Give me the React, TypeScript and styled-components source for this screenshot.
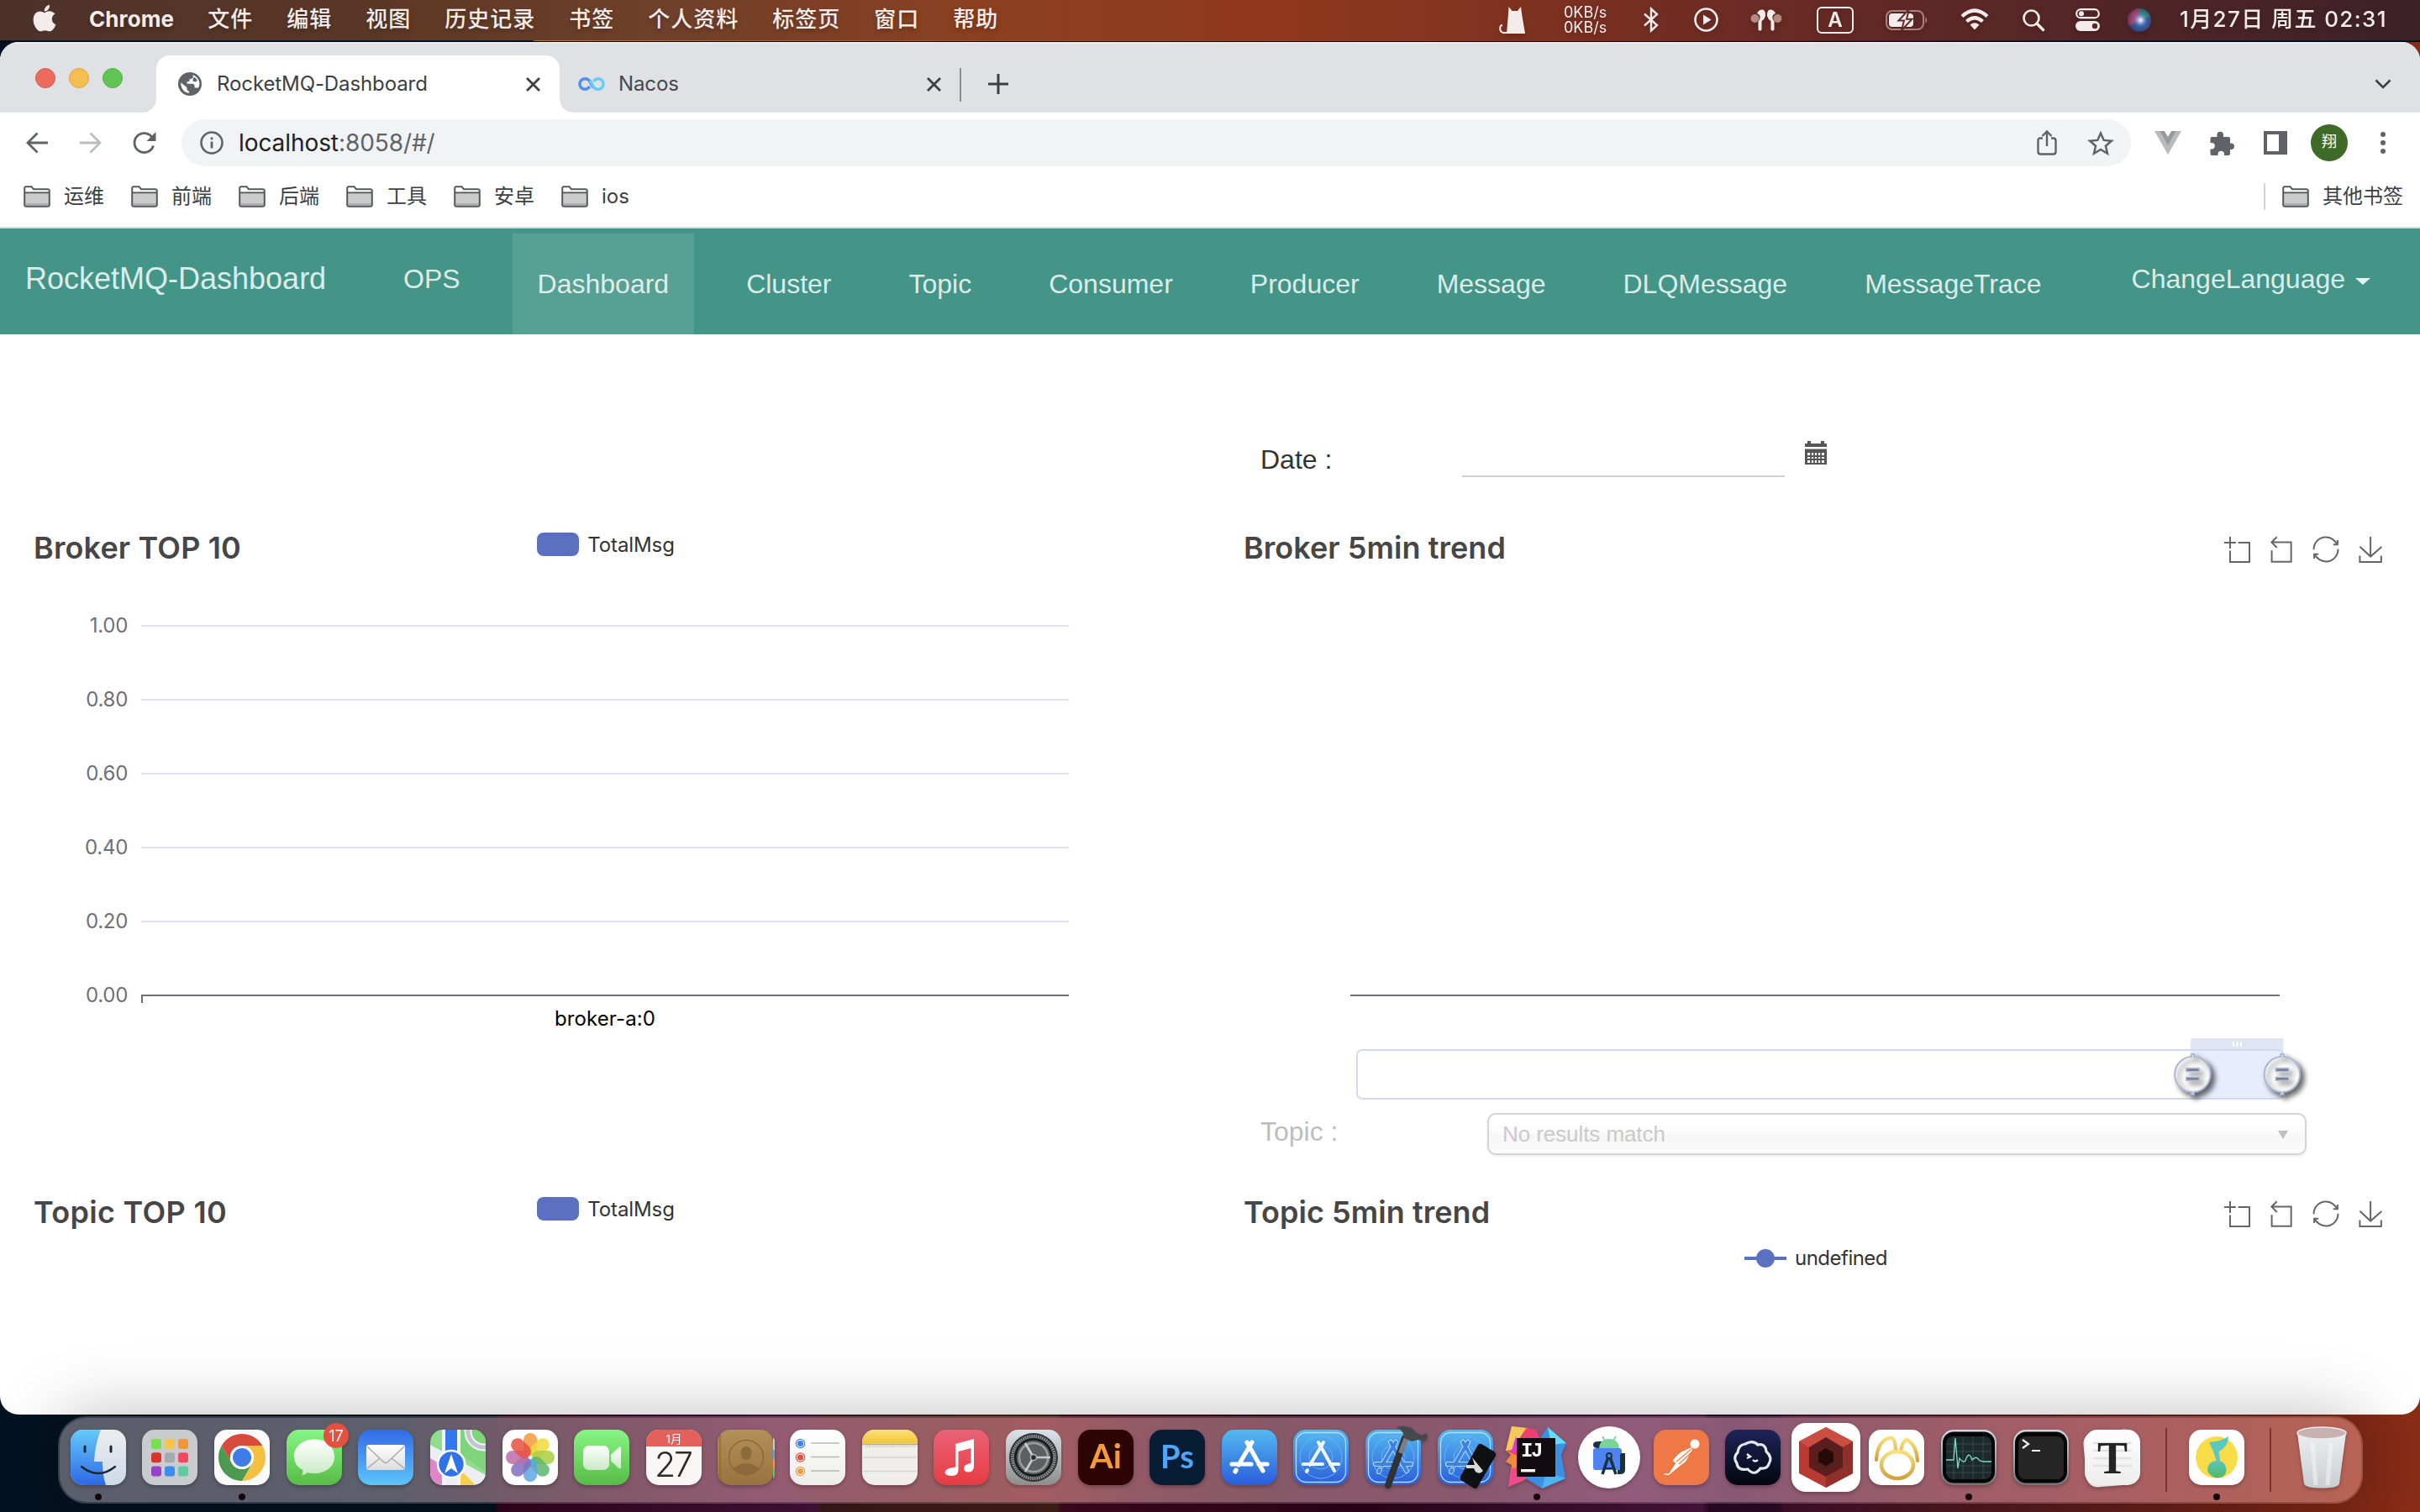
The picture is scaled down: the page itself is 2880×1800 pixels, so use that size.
import React from "react";
import styled, { createGlobalStyle } from "styled-components";

const UI = `Inter, "Noto Sans CJK SC", sans-serif`;
const HELV = `"Liberation Sans", "Noto Sans CJK SC", sans-serif`;

const GlobalStyle = createGlobalStyle`
  * { box-sizing: border-box; }
  body { margin: 0; width: 2880px; height: 1800px; overflow: hidden; font-family: ${UI}; }
  svg { display: block; flex: none; overflow: visible; }
`;

/* ---------- desktop ---------- */

const Desktop = styled.div`
  width: 2880px;
  height: 1800px;
  display: flex;
  flex-direction: column;
  overflow: hidden;
  background:
    linear-gradient(90deg, #031222 0, #03101c 588px, #33051c 594px, #45133c 970px, #3d1a1c 978px, #43201a 1258px,
      #42081f 1264px, #2c0519 1620px, #4a1640 2026px, #2a0a25 2034px, #2c0a24 2116px, #43102c 2124px, #5b1c1c 2440px,
      #7f2715 2780px, #8a2d16 2880px);
`;

const MenuBar = styled.header`
  flex: none;
  height: 48px;
  padding: 0 36px 3px 39px;
  display: flex;
  align-items: center;
  color: #f3ecea;
  font: 500 26px/45px ${UI};
  background: linear-gradient(90deg, #4d3129 0, #5b3826 450px, #70402a 800px, #8c3f1f 1180px, #90381c 1500px,
    #85341e 1720px, #6b2b24 2080px, #552626 2440px, #3c2129 2880px);
`;

const MenuTitles = styled.nav`
  display: flex;
  flex: 1;
  gap: 40px;
  letter-spacing: 1px;
  text-shadow: 0 3px 5px rgba(0, 0, 0, 0.25);
`;

const AppleMark = styled.span`
  width: 27px;
  padding-top: 5px;
`;

const AppName = styled.b`
  letter-spacing: 0.1px;
  font-weight: 700;
`;

const StatusItem = styled.span<{ $gap: number; $w?: number }>`
  flex: none;
  margin-left: ${(p) => p.$gap}px;
  width: ${(p) => (p.$w ? `${p.$w}px` : "auto")};
  white-space: nowrap;
  filter: drop-shadow(0 3px 3px rgba(0, 0, 0, 0.2));
`;

const NetSpeed = styled.span`
  display: block;
  padding-top: 3px;
  font: 400 18px/18px ${UI};
`;

const KeyBox = styled.span`
  display: flex;
  align-items: center;
  justify-content: center;
  width: 44px;
  height: 32px;
  margin-top: 3px;
  border: 2px solid #f3ecea;
  border-radius: 6px;
  font: 600 24px/28px ${UI};
`;

const Clock = styled.time`
  letter-spacing: 1.4px;
`;

const Seam = styled.div`
  flex: none;
  height: 2px;
  border-bottom: 1px solid #050505;
  background: linear-gradient(90deg, #03182c 0, #03182c 634px, #b5752c 636px, #a04a1e 1200px, #8a2c16 1900px, #501027 2250px,
    #0b1430 2500px, #04182c 2880px);
`;

/* ---------- browser window ---------- */

const Window = styled.main`
  flex: none;
  height: 1634px;
  display: flex;
  flex-direction: column;
  border-radius: 22px;
  overflow: hidden;
  background: #fff;
`;

const TabStrip = styled.div`
  flex: none;
  height: 84px;
  display: flex;
  align-items: flex-end;
  background: #dfe1e5;
  border-top: 2px solid #ebecef;
`;

const Lights = styled.div`
  width: 186px;
  height: 82px;
  padding: 0 0 0 42px;
  display: flex;
  align-items: center;
  gap: 16px;
`;

const Light = styled.i<{ $c: string; $b: string }>`
  width: 24px;
  height: 24px;
  border-radius: 50%;
  background: ${(p) => p.$c};
  border: 1px solid ${(p) => p.$b};
`;

const Tab = styled.div<{ $active?: boolean; $w: number; $gap: number }>`
  position: relative;
  width: ${(p) => p.$w}px;
  height: 68px;
  padding: 0 ${(p) => (p.$active ? 23 : 22)}px 0 ${(p) => (p.$active ? 26 : 22)}px;
  display: flex;
  align-items: center;
  gap: ${(p) => p.$gap}px;
  border-radius: 16px 16px 0 0;
  background: ${(p) => (p.$active ? "#fff" : "transparent")};
  color: ${(p) => (p.$active ? "#3c4043" : "#45494d")};
  font-size: 24px;
  letter-spacing: -0.1px;

  &::before,
  &::after {
    content: "";
    display: ${(p) => (p.$active ? "block" : "none")};
    position: absolute;
    bottom: 0;
    width: 16px;
    height: 16px;
  }
  &::before {
    left: -16px;
    background: radial-gradient(circle at 0 0, transparent 15.5px, #fff 16px);
  }
  &::after {
    right: -16px;
    background: radial-gradient(circle at 100% 0, transparent 15.5px, #fff 16px);
  }
`;

const TabLabel = styled.span`
  flex: 1;
  line-height: 66px;
`;

const TabDivider = styled.i`
  width: 2px;
  height: 40px;
  margin-bottom: 13px;
  background: #8a8d91;
`;

const NewTab = styled.div`
  flex: 1;
  height: 68px;
  padding: 0 34px 0 32px;
  display: flex;
  align-items: center;
  justify-content: space-between;
`;

const Toolbar = styled.div`
  flex: none;
  height: 72px;
  padding: 0 12px;
  display: flex;
  align-items: center;
`;

const IconSlot = styled.div`
  width: 64px;
  height: 56px;
  display: flex;
  align-items: center;
  justify-content: center;
`;

const Omnibox = styled.div`
  flex: 1;
  height: 56px;
  margin: 0 12px;
  padding: 0 4px 0 22px;
  display: flex;
  align-items: center;
  border-radius: 28px;
  background: #f1f3f4;
`;

const Url = styled.div`
  flex: 1;
  padding-left: 18px;
  font-size: 28px;
  line-height: 54px;
  letter-spacing: -0.08px;
  color: #5f6368;
`;

const UrlHost = styled.span`
  color: #202124;
`;

const Avatar = styled.div`
  width: 44px;
  height: 44px;
  border-radius: 50%;
  background: #3f6a28;
  color: #fff;
  text-align: center;
  font: 400 18px/42px ${UI};
`;

const Bookmarks = styled.div`
  flex: none;
  height: 66px;
  padding: 0 20px 8px 28px;
  display: flex;
  align-items: center;
  border-bottom: 2px solid #d9dbdd;
  color: #3c4043;
  font: 400 24px/52px ${UI};
`;

const Bookmark = styled.div<{ $w?: number }>`
  width: ${(p) => (p.$w ? `${p.$w}px` : "auto")};
  display: flex;
  align-items: center;
  gap: 16px;
`;

const BookmarkDivider = styled.i`
  width: 2px;
  height: 32px;
  margin: 0 20px 0 auto;
  background: #cfd1d4;
`;

/* ---------- dashboard page ---------- */

const Nav = styled.nav`
  flex: none;
  height: 126px;
  padding-left: 30px;
  display: flex;
  background: #439588;
  color: rgba(255, 255, 255, 0.84);
  font: 400 32px/120px ${HELV};
`;

const Brand = styled.a`
  width: 420px;
  font-size: 36px;
  line-height: 119px;
`;

const NavItem = styled.a<{ $active?: boolean; $raised?: boolean }>`
  height: 120px;
  margin: ${(p) => (p.$raised ? 0 : 6)}px 32px 0 0;
  padding: 0 30px;
  background: ${(p) => (p.$active ? "#57a094" : "transparent")};
`;

const Language = styled.a`
  margin-left: 15px;
  padding-left: 30px;
  display: flex;
  align-items: center;
  gap: 12px;
  height: 120px;
`;

const Caret = styled.i`
  border: 9px solid transparent;
  border-top: 8px solid rgba(255, 255, 255, 0.88);
  border-bottom: 0;
  margin-top: 5px;
`;

const Page = styled.section`
  flex: 1;
  display: grid;
  grid-template-columns: 1fr 1fr;
`;

const LeftColumn = styled.div`
  padding-top: 230px;
`;

const RightColumn = styled.div`
  padding-top: 128px;
`;

const FormRow = styled.label<{ $muted?: boolean }>`
  display: flex;
  padding-left: 60px;
  height: ${(p) => (p.$muted ? 50 : 42)}px;
  font: 400 32px/${(p) => (p.$muted ? 44 : 42)}px ${HELV};
  color: ${(p) => (p.$muted ? "#bdbdbd" : "#333")};
`;

const FieldName = styled.span<{ $w: number }>`
  width: ${(p) => p.$w}px;
`;

const DateInput = styled.div`
  width: 384px;
  border-bottom: 2px solid #cfcfcf;
  margin-right: 24px;
`;

const Select = styled.div`
  width: 975px;
  height: 50px;
  padding: 0 20px 0 16px;
  display: flex;
  align-items: center;
  justify-content: space-between;
  border: 2px solid #d4d4d4;
  border-radius: 10px;
  background: linear-gradient(#fff 20%, #fafafa 50%, #f6f6f6 52%, #fbfbfb 100%);
  box-shadow: 0 2px 3px rgba(0, 0, 0, 0.07);
  font: 400 26px/48px ${HELV};
  letter-spacing: -0.08px;
  color: #cacaca;
`;

const SelectArrow = styled.i`
  border: 6px solid transparent;
  border-top: 10px solid #bfbfbf;
  border-bottom: 0;
  margin-top: 2px;
`;

const ChartHeader = styled.div<{ $top?: number }>`
  height: 40px;
  margin-top: ${(p) => p.$top || 0}px;
  padding: 0 44px 0 40px;
  display: grid;
  grid-template-columns: 1fr auto 1fr;
`;

const ChartTitle = styled.h2<{ $track?: number }>`
  margin: 0;
  font: 560 36px/48px ${UI};
  letter-spacing: ${(p) => p.$track || 0}px;
  color: #464646;
`;

const Legend = styled.div<{ $centered?: boolean }>`
  height: 40px;
  margin-top: ${(p) => (p.$centered ? 19 : 0)}px;
  padding-left: ${(p) => (p.$centered ? 2 : 6)}px;
  display: flex;
  align-items: center;
  justify-content: center;
  gap: 10px;
  font: 400 24px/42px ${UI};
  letter-spacing: ${(p) => (p.$centered ? -0.5 : -0.1)}px;
  color: #333;
`;

const LegendLabel = styled.span`
  padding-top: 2px;
`;

const Swatch = styled.i`
  width: 50px;
  height: 28px;
  border-radius: 8px;
  background: #5b70c0;
`;

const Toolbox = styled.div`
  display: flex;
  justify-content: flex-end;
  align-items: flex-start;
  gap: 23px;
  padding-top: 11px;
`;

/* ---------- dock ---------- */

const Dock = styled.footer`
  position: relative;
  flex: none;
  width: 2743px;
  height: 104px;
  margin: 2px 0 0 69px;
  padding-left: 3px;
  display: flex;
  border: 2px solid rgba(255, 255, 255, 0.2);
  border-radius: 34px;
  background: linear-gradient(90deg, #5b5f6b 0, #5d5f6b 400px, #755a68 540px, #85596a 700px, #935b72 840px, #9b5d60 1090px,
    #a35d62 1160px, #915a66 1290px, #865968 1440px, #8a5970 1700px, #935b7b 1870px, #885974 1990px, #9a5c6a 2200px,
    #a85f62 2450px, #b86355 2743px) padding-box;
  box-shadow: 0 0 84px rgba(0, 0, 0, 0.27);
`;

const DockSlot = styled.div<{ $gap?: number }>`
  flex: none;
  width: 85.64px;
  margin-left: ${(p) => p.$gap || 0}px;
  padding-top: 14px;
  display: flex;
  flex-direction: column;
  align-items: center;
  gap: 10px;
`;

const DockIcon = styled.div`
  height: 66px;
  filter: drop-shadow(0 2px 2px rgba(0, 0, 0, 0.28));
`;

const RunningDot = styled.i`
  width: 8px;
  height: 8px;
  border-radius: 50%;
  background: #150508;
`;

const DockDivider = styled.i<{ $gap: number }>`
  flex: none;
  width: 2px;
  height: 76px;
  margin: 12px 0 0 ${(p) => p.$gap}px;
  background: #7b332c;
`;

/* ---------- small icons ---------- */

const Folder = () => (
  <svg width="32" height="26" viewBox="0 0 32 26">
    <path d="M1.2 22.5V3Q1.2 1.2 3 1.2H9.5L12 4.2H28.6Q30.8 4.2 30.8 6.4V22.5Q30.8 24.8 28.6 24.8H3.4Q1.2 24.8 1.2 22.5Z" fill="#cbcbcb" stroke="#55585b" strokeWidth="2" />
    <path d="M2.4 2.4H9L11.3 5.4H29.6V7.6H2.4Z" fill="#fff" />
    <path d="M1.5 8.4H30.5" stroke="#55585b" strokeWidth="1.6" />
    <path d="M2.4 22.4H29.6" stroke="#a9a9a9" strokeWidth="2.4" />
  </svg>
);

const Close = () => (
  <svg width="17" height="17" viewBox="0 0 17 17">
    <path d="M1 1L16 16M16 1L1 16" stroke="#3c4043" strokeWidth="2.8" />
  </svg>
);

const Globe = () => (
  <svg width="28" height="28" viewBox="0 0 28 28">
    <circle cx="14" cy="14" r="14" fill="#5f6368" />
    <path d="M17.5 3.2L17.8 6.2Q16.5 8.3 13.5 8.4V11H10.5V13.8H17.5Q19.6 14 19.6 16.4V18.5H22.3Q24 18.7 24.3 18.2A11 11 0 0 0 17.5 3.2Z" fill="#fff" />
    <path d="M3.2 12.2Q3 20.5 9.5 24L12.8 25V22.2Q10.3 22 10.3 19.4V17.9Z" fill="#fff" />
    <path d="M17.6 10.8V7L20 6L22.8 9.5L21 11.6Z" fill="#5f6368" />
  </svg>
);

const NacosLogo = () => (
  <svg width="32" height="16" viewBox="0 0 32 16">
    <path d="M18.5 12.5Q15.500 9 14.500 6Q12.500 1.700 8.2 1.7A6.300 6.300 0 0 0 8.200 14.300Q11.500 14.300 13.600 11" fill="none" stroke="#4c8ff5" strokeWidth="3.4" />
    <path d="M14 3.800Q16.500 7 17.500 10Q19.500 14.300 23.800 14.300A6.300 6.300 0 0 0 23.800 1.700Q20.500 1.700 18.400 5" fill="none" stroke="#63cdf2" strokeWidth="3.4" />
  </svg>
);

const TOOL_PATHS = [
  { x: 0, y: 0, w: 58, h: 58, d: "M0,13.5h26.9 M13.5,26.9V0 M32.1,13.5H58V58H13.5 V32.1" },
  { x: 3.4, y: 1.4, w: 58, h: 56.7, d: "M22,1.4L9.9,13.5l12.3,12.3 M10.3,13.5H54.9v44.6 H10.3v-26" },
  { x: 1, y: 1, w: 58, h: 58, d: "M47,18.9h9.8V8.7 M56.3,20.1 C52.1,9,40.5,0.6,26.8,2.1C12.6,3.7,1.6,16.2,2.1,30.6 M13,41.1H3.1v10.2 M3.7,39.9c4.2,11.1,15.8,19.5,29.5,18 c14.2-1.6,25.2-14.1,24.7-28.5" },
  { x: 0, y: 0, w: 58, h: 58, d: "M4.7,22.9L29.3,45.5L54.7,23.4M4.6,43.6L4.6,58L53.8,58L53.8,43.6M29.2,45.1L29.2,0" },
];

const ChartTools = () => (
  <Toolbox>
    {TOOL_PATHS.map((t) => (
      <svg key={t.d} width="30" height="30" viewBox={`${t.x} ${t.y} ${t.w} ${t.h}`}>
        <path d={t.d} fill="none" stroke="#666" strokeWidth="3.9" />
      </svg>
    ))}
  </Toolbox>
);

const Calendar = () => (
  <svg width="26" height="28" viewBox="0 0 26 28" transform="translate(0 -1)">
    <path d="M0 3H3V0H7V3H19V0H23V3H26V7H0ZM0 9.4H26V28H0Z" fill="#555" />
    <path d="M3 14H23V26H3Z" fill="#fff" />
    <path d="M3 18H23M3 22H23M7 14V26M11 14V26M15 14V26M19 14V26" stroke="#555" strokeWidth="1.8" />
  </svg>
);

/* ---------- charts ---------- */

const TICKS = ["1.00", "0.80", "0.60", "0.40", "0.20", "0.00"];

const BarChart = () => (
  <svg width="1440" height="751" viewBox="0 668 1440 751" fontFamily={UI} fontSize="24">
    {TICKS.map((t, i) => (
      <g key={t}>
        {i < 5 && <rect x="168" y={744 + i * 88} width="1104" height="2" fill="#e0e4ef" />}
        <text x="152" y={753 + i * 88} textAnchor="end" fill="#6e7079" letterSpacing="-0.3">{t}</text>
      </g>
    ))}
    <path d="M168 1185H1272M169 1185V1194" stroke="#6e7079" strokeWidth="2" />
    <text x="720" y="1221" textAnchor="middle" fill="#000" letterSpacing="0.1">broker-a:0</text>
  </svg>
);

const HANDLE =
  "M10.7,11.9v-1.3H9.3v1.3c-4.9,0.3-8.8,4.4-8.8,9.4c0,5,3.9,9.1,8.8,9.4v1.3h1.3v-1.3c4.9-0.3,8.8-4.4,8.8-9.4C19.5,16.3,15.6,12.2,10.7,11.9z M13.3,24.4H6.7V23h6.6V24.4z M13.3,19.6H6.7v-1.4h6.6V19.6z";

const Handle = ({ x }: { x: number }) => (
  <g transform={`translate(${x} 1279) scale(2.24) translate(-10 -21.3)`}>
    <path d={HANDLE} fill="#fff" filter="url(#drop)" />
    <path d={HANDLE} fill="none" stroke="#acb8d1" strokeWidth="0.9" filter="url(#drop)" />
    <path d="M6.9 18.9H13.1M6.9 23.7H13.1" stroke="#6c7280" strokeWidth="0.7" />
  </g>
);

const TrendChart = () => (
  <svg width="1440" height="657" viewBox="1440 668 1440 657">
    <defs>
      <filter id="drop" x="-40%" y="-40%" width="200%" height="200%">
        <feDropShadow dx="1.9" dy="1.9" stdDeviation="1.4" floodColor="#000" floodOpacity="0.6" />
      </filter>
    </defs>
    <path d="M1607 1185H2713" stroke="#6e7079" strokeWidth="2" />
    <rect x="2607" y="1250" width="110" height="58" fill="#e8edfd" />
    <path d="M2607 1250V1239Q2607 1236 2610 1236H2714.500Q2717.500 1236 2717.500 1239V1250Z" fill="#dfe5f1" />
    <path d="M2658 1240V1246M2662.500 1240V1246M2667 1240V1246" stroke="#fff" strokeWidth="2" />
    <rect x="1615" y="1250" width="1102" height="58" rx="6" fill="none" stroke="#d2dbee" strokeWidth="2" />
    <Handle x={2609.5} />
    <Handle x={2716} />
  </svg>
);

/* ---------- status icons ---------- */

const W = "#f3ecea";

const Apple = () => (
  <svg width="28" height="33" viewBox="0 0 28 33">
    <path d="M20 0.500Q20.500 4.500 18.200 6.700Q16.200 8.700 13.800 8.400Q13.500 5.400 15.700 3Q17.500 1 20 0.500Z" fill={W} />
    <path d="M14 10.200Q16.800 8.300 19.800 8.300Q24 8.400 26.500 11.600Q22.700 14 22.800 18Q23 22.500 27.500 24.300Q26 28.500 23.200 31Q20.800 33 17.600 31.700Q14.600 30.600 11.600 31.700Q8.500 33 6 31Q0.500 25.500 0.600 17.700Q1.300 9.200 8.300 8.500Q11.200 8.500 14 10.200Z" fill={W} />
  </svg>
);

const StatusIcons = () => (
  <>
    <StatusItem $gap={0}>
      <svg width="31" height="32" viewBox="0 0 31 32" transform="translate(0 1)">
        <path d="M9 32L11 8L11.500 0L15.500 5H22L26 0L27 8L31 32Z" fill={W} />
        <path d="M11 31H5Q1 30 1.200 25Q1.500 22 4 22" fill="none" stroke={W} strokeWidth="2" />
      </svg>
    </StatusItem>
    <StatusItem $gap={46} $w={51}>
      <NetSpeed>0KB/s<br />0KB/s</NetSpeed>
    </StatusItem>
    <StatusItem $gap={43}>
      <svg width="20" height="29" viewBox="0 0 20 29" transform="translate(0 1)">
        <path d="M2 7.500L17 21L10 27.500V1.500L17 8L2 21.500" fill="none" stroke={W} strokeWidth="2.400" />
      </svg>
    </StatusItem>
    <StatusItem $gap={41}>
      <svg width="29" height="29" viewBox="0 0 29 29" transform="translate(0 1)">
        <circle cx="14.500" cy="14.500" r="13" fill="none" stroke={W} strokeWidth="2.600" />
        <path d="M11 8.500L20.500 14.500L11 20.500Z" fill={W} />
      </svg>
    </StatusItem>
    <StatusItem $gap={38}>
      <svg width="38" height="26" viewBox="0 0 38 26" transform="translate(0 1)">
        <circle cx="5.500" cy="11" r="5" fill="#b58a80" />
        <circle cx="32.500" cy="11" r="5" fill="#b58a80" />
        <path d="M8 5Q10 0 15 0.500Q18.500 2 18 8Q17 12 13.500 14V24Q13.500 25.500 11.500 25.500Q9.500 25.500 9.500 24V14.500Q12 12 11.500 8Q10.500 5.500 8 5Z" fill={W} />
        <path d="M30 5Q28 0 23 0.500Q19.500 2 20 8Q21 12 24.500 14V24Q24.500 25.500 26.500 25.500Q28.500 25.500 28.500 24V14.500Q26 12 26.500 8Q27.500 5.500 30 5Z" fill={W} />
      </svg>
    </StatusItem>
    <StatusItem $gap={41}><KeyBox>A</KeyBox></StatusItem>
    <StatusItem $gap={38}>
      <svg width="51" height="24" viewBox="0 0 51 24" transform="translate(0 1)">
        <rect x="1" y="1" width="44" height="22" rx="7" fill="none" stroke="#a98280" strokeWidth="2" />
        <path d="M47.500 8Q51 12 47.500 16Z" fill="#a98280" />
        <rect x="4" y="4" width="29" height="16" rx="4" fill={W} />
        <path d="M28 -1L15.500 12.500H22L19 24L31.500 10.800H25Z" fill={W} stroke="#65292a" strokeWidth="2" />
      </svg>
    </StatusItem>
    <StatusItem $gap={38}>
      <svg width="34" height="26" viewBox="0 0 34 26">
        <path d="M2 9.500Q17 -4.500 32 9.500" fill="none" stroke={W} strokeWidth="4.200" />
        <path d="M7.500 15.500Q17 7 26.500 15.500" fill="none" stroke={W} strokeWidth="4.200" />
        <path d="M11.500 19.500Q17 15 22.500 19.500L17 25.500Z" fill={W} />
      </svg>
    </StatusItem>
    <StatusItem $gap={40}>
      <svg width="26" height="26" viewBox="0 0 26 26" transform="translate(0 1)">
        <circle cx="10.500" cy="10.500" r="9" fill="none" stroke={W} strokeWidth="2.600" />
        <path d="M17 17L24.500 24.500" stroke={W} strokeWidth="3.400" strokeLinecap="round" />
      </svg>
    </StatusItem>
    <StatusItem $gap={37}>
      <svg width="29" height="27" viewBox="0 0 29 27" transform="translate(0 1)">
        <rect x="1.200" y="1.200" width="26.600" height="10" rx="5" fill="none" stroke={W} strokeWidth="2.200" />
        <circle cx="7" cy="6.200" r="3" fill={W} />
        <rect x="0" y="15" width="29" height="12" rx="6" fill={W} />
        <circle cx="23" cy="21" r="3.200" fill="#59282a" />
      </svg>
    </StatusItem>
    <StatusItem $gap={33}>
      <svg width="28" height="28" viewBox="0 0 28 28" transform="translate(0 1)">
        <defs>
          <radialGradient id="siri" cx="0.550" cy="0.500">
            <stop offset="0" stopColor="#fff" />
            <stop offset="0.250" stopColor="#a9b5e6" stopOpacity="0.850" />
            <stop offset="0.600" stopColor="#3b6fb5" stopOpacity="0.250" />
            <stop offset="1" stopColor="#2a2238" stopOpacity="0.450" />
          </radialGradient>
        </defs>
        <circle cx="14" cy="14" r="14" fill="#35539a" />
        <path d="M14 0A14 14 0 0 0 2 21L14 14Z" fill="#c4406e" />
        <path d="M14 0A14 14 0 0 1 27 10L14 14Z" fill="#2f8a72" />
        <circle cx="14" cy="14" r="14" fill="url(#siri)" />
      </svg>
    </StatusItem>
  </>
);

/* ---------- dock icons ---------- */

const grad = (id: string, a: string, b: string) => (
  <linearGradient id={id} x1="0" y1="0" x2="0" y2="1">
    <stop offset="0" stopColor={a} />
    <stop offset="1" stopColor={b} />
  </linearGradient>
);

const DockDefs = () => (
  <svg width="0" height="0">
    <defs>
      {grad("finderL", "#63cbf9", "#2f68e6")}
      {grad("finderR", "#ededf0", "#cedae9")}
      {grad("green", "#87f584", "#56bd45")}
      {grad("bubble", "#ffffff", "#c9e9c4")}
      {grad("mail", "#326ae8", "#5cc6f9")}
      {grad("env", "#ffffff", "#dcdcdc")}
      {grad("brown", "#b3915a", "#98723f")}
      {grad("paper", "#ffffff", "#ececea")}
      {grad("yellow", "#fbe07a", "#f4c435")}
      {grad("music", "#ea6276", "#e63c42")}
      {grad("steel", "#dbe3ea", "#8d8d8b")}
      {grad("store", "#54b9f0", "#2a5ddb")}
      {grad("navy", "#1e2459", "#03060e")}
      {grad("gold", "#f7e17c", "#cfa23e")}
      {grad("rim", "#cfdbe3", "#70777a")}
      {grad("glass", "#ecedef", "#c9ced2")}
      {grad("note", "#5cc6c0", "#52b866")}
      {grad("sheet", "#fefefe", "#ededed")}
      <clipPath id="tile"><rect width="66" height="66" rx="15" /></clipPath>
    </defs>
  </svg>
);

const Tile = ({ fill, children }: { fill: string; children?: React.ReactNode }) => (
  <svg width="66" height="66" viewBox="0 0 66 66">
    <rect width="66" height="66" rx="15" fill={fill} />
    {children}
  </svg>
);

const StoreSticks = ({ outline, slim }: { outline?: boolean; slim?: boolean }) => {
  const line = (w: number, c: string) => (
    <path d="M36 15L20 42M30 15L49 49M12 41H35M44 41H54M17 48L16 50" stroke={c} strokeWidth={w} strokeLinecap="round" fill="none" />
  );
  return outline ? <>{line(6, "#b9dbfa")}{line(4, "#3b82e6")}</> : line(slim ? 4 : 5.2, slim ? "#eef5fd" : "#fff");
};

const Blueprint = ({ solid, children }: { solid?: boolean; children?: React.ReactNode }) => (
  <Tile fill="url(#store)">
    <rect x="3.500" y="3.500" width="59" height="59" rx="12" fill="none" stroke="#b5dcfa" strokeWidth="1.300" />
    <circle cx="33" cy="33" r="25" fill="none" stroke="#6fb0f2" strokeWidth="1" />
    <circle cx="33" cy="33" r="14" fill="none" stroke="#6fb0f2" strokeWidth="1" />
    <StoreSticks outline={!solid} slim={solid} />
    {children}
  </Tile>
);

const LAUNCH = ["#76e04f", "#f6c544", "#ee9837", "#d8352c", "#a3a9ae", "#ee4a66", "#9444c8", "#3a8cf0", "#5fcaa2"];
const PETALS = ["#f29a38", "#f1da3c", "#a9cf45", "#5fb56e", "#5da7e0", "#7f6fc0", "#bd6ba8", "#e8503e"];

const ICONS: React.ReactNode[] = [
  <Tile fill="url(#finderR)">
    <path clipPath="url(#tile)" d="M0 0H36Q29 18 28 38H38Q38 55 42 66H0Z" fill="url(#finderL)" />
    <path d="M17 20V26M48 20V26" stroke="#1c2733" strokeWidth="3" strokeLinecap="round" />
    <path d="M13 44Q33 60 53 44" fill="none" stroke="#1c2733" strokeWidth="2.400" strokeLinecap="round" />
  </Tile>,
  <Tile fill="#c9cbce">
    {LAUNCH.map((c, i) => (
      <rect key={c} x={11 + (i % 3) * 16} y={11 + Math.floor(i / 3) * 16.2} width="12" height="12" rx="3" fill={c} />
    ))}
  </Tile>,
  <Tile fill="#fafafa">
    {["#d84b3c", "#f4c042", "#4c9a52"].map((c, i) => (
      <path key={c} d="M8.750 19A28 28 0 0 1 57.250 19L33 19A14 14 0 0 0 20.880 40Z" fill={c} transform={`rotate(${i * 120} 33 33)`} />
    ))}
    <circle cx="33" cy="33" r="14" fill="#fff" />
    <circle cx="33" cy="33" r="11" fill="#3f7ce8" />
  </Tile>,
  <Tile fill="url(#green)">
    <path d="M33 11.500C47 11.500 57 20 57 32S47 52 33 52Q28 52 25 51Q22 54 18 54.500Q20 51 19.500 48Q9 43 9 32C9 20 19 11.500 33 11.500Z" fill="url(#bubble)" />
    <circle cx="59" cy="7" r="15" fill="#e5503f" />
    <text x="59" y="14" textAnchor="middle" fill="#fff" fontFamily={UI} fontSize="18">17</text>
  </Tile>,
  <Tile fill="url(#mail)">
    <rect x="10" y="18" width="46" height="30" rx="3" fill="url(#env)" />
    <path d="M11 20L30 38Q33 41 36 38L55 20M11 46L26 34M55 46L40 34" fill="none" stroke="#a9a9a9" strokeWidth="1.400" />
  </Tile>,
  <Tile fill="#8fdc8c">
    <g clipPath="url(#tile)">
      <path d="M0 18L66 54V66H0Z" fill="#eceef2" />
      <path d="M34 0H66V50L34 28Z" fill="#80d47c" />
      <path d="M0 34L14 42V66H0Z" fill="#df86c8" />
      <path d="M38 50L54 66H34Z" fill="#f7cf48" />
      <circle cx="64" cy="2" r="19" fill="none" stroke="#f4f4f6" strokeWidth="9" />
      <circle cx="64" cy="2" r="19" fill="none" stroke="#c2c4cf" strokeWidth="5" />
      <path d="M14 0H18V66H14ZM32 0H36V66H32Z" fill="#f4f4f6" />
      <path d="M18 0H32V40H18Z" fill="#3278ec" />
    </g>
    <circle cx="25" cy="41" r="16" fill="#2f72ea" stroke="#fff" strokeWidth="2.600" />
    <path d="M25 29L33 52L25 46L17 52Z" fill="#fff" />
  </Tile>,
  <Tile fill="#fdfdfd">
    {PETALS.map((c, i) => (
      <rect key={c} x="25" y="4" width="16" height="27" rx="8" fill={c} opacity="0.850" transform={`rotate(${i * 45} 33 33)`} />
    ))}
  </Tile>,
  <Tile fill="url(#green)">
    <rect x="11" y="19" width="31" height="29" rx="7" fill="url(#bubble)" />
    <path d="M44 30L54 20.500Q56 20 56 22V45Q56 47 54 46.500L44 37Z" fill="url(#bubble)" />
  </Tile>,
  <Tile fill="#f8f7f6">
    <path clipPath="url(#tile)" d="M0 0H66V20H0Z" fill="#e2615a" />
    <text x="33" y="16" textAnchor="middle" fill="#fff" fontFamily={UI} fontSize="13.500">1月</text>
    <text x="32" y="56" textAnchor="middle" fill="#2b2b2b" fontFamily={UI} fontWeight="300" fontSize="41" letterSpacing="-2">27</text>
  </Tile>,
  <Tile fill="url(#brown)">
    <path d="M66 10Q68 10 68 14V24H66Z" fill="#c9c9c9" />
    <path d="M66 24H68V35H66Z" fill="#55a6dc" />
    <path d="M66 35H68V46H66Z" fill="#ee9a3b" />
    <path d="M66 46H68V54Q68 57 66 58Z" fill="#6bc455" />
    <path d="M3 6V60" stroke="#8d6b3c" strokeWidth="1.400" />
    <circle cx="34" cy="33" r="20.500" fill="none" stroke="#8a6a3a" strokeWidth="1.500" />
    <ellipse cx="34" cy="28" rx="6.500" ry="8" fill="#8a6a3a" />
    <path d="M19 46Q34 34 49 46Q42 53.500 34 53.500T19 46Z" fill="#8a6a3a" />
  </Tile>,
  <Tile fill="url(#paper)">
    {["#3a82f0", "#e4503f", "#ee9a3b"].map((c, i) => (
      <g key={c}>
        <circle cx="12.500" cy={16.500 + i * 16.500} r="5.200" fill="#fff" stroke={c} strokeWidth="1.200" />
        <circle cx="12.500" cy={16.500 + i * 16.500} r="3.600" fill={c} />
        <path d={`M25 ${16 + i * 16.5}H59`} stroke="#b9b9b9" strokeWidth="1.400" />
      </g>
    ))}
  </Tile>,
  <Tile fill="#efeeeb">
    <path clipPath="url(#tile)" d="M0 0H66V16.500H0Z" fill="url(#yellow)" />
    <path d="M0 17.500H66" stroke="#b5ab8c" strokeWidth="1.600" />
    <path d="M3 20H63" stroke="#c4c2bb" strokeWidth="1.600" strokeDasharray="1.400 1.400" />
    <path d="M1 33H65M1 49.500H65" stroke="#d6d5d2" strokeWidth="1.400" />
  </Tile>,
  <Tile fill="url(#music)">
    <path d="M26 17L48 11V43.500Q48 50 41.500 50.500Q36 50.500 36 45.500Q36.500 41 44.500 40V22L29.500 26V48Q29.500 54 23 55Q13.500 55 13.500 50.500Q14 46 26 44.500Z" fill="#fff" />
  </Tile>,
  <Tile fill="url(#steel)">
    <circle cx="33" cy="33" r="29" fill="#303234" />
    <circle cx="33" cy="33" r="25" fill="none" stroke="#8f9497" strokeWidth="4" strokeDasharray="1.600 1" />
    <circle cx="33" cy="33" r="21.500" fill="#5b5f61" stroke="#191a1b" strokeWidth="2.500" />
    <circle cx="33" cy="33" r="17" fill="none" stroke="#9a9ea0" strokeWidth="2.500" />
    <path d="M33 33H53M33 33L23 16M33 33L23 50" stroke="#c9cccd" strokeWidth="2.600" />
    <circle cx="33" cy="33" r="3.600" fill="#2a2c2e" stroke="#b9bcbd" strokeWidth="1.500" />
  </Tile>,
  <Tile fill="#2d0404">
    <text x="33" y="46" textAnchor="middle" fill="#f59b3a" fontFamily={`Lato, ${UI}`} fontWeight="700" fontSize="40">Ai</text>
  </Tile>,
  <Tile fill="#071d33">
    <text x="33" y="46" textAnchor="middle" fill="#50a5f9" fontFamily={`Lato, ${UI}`} fontWeight="700" fontSize="38">Ps</text>
  </Tile>,
  <Tile fill="url(#store)"><StoreSticks /></Tile>,
  <Blueprint solid />,
  <Blueprint>
    <path d="M47 10L27 66" stroke="#2f3237" strokeWidth="8" strokeLinecap="round" />
    <path d="M48.500 10L42 28" stroke="#7b7e82" strokeWidth="6" />
    <path d="M37 -3Q52 -7 59 2L66 7L73 4L74 10L69 14L63 12L55 14L46 10Q46 1 37 -3Z" fill="#45484d" />
  </Blueprint>,
  <Blueprint>
    <path d="M52 17L67 26Q70 28 69 31L47 69Q45 71 42 69L29 61Q26 59 27 56L48 18Q50 16 52 17Z" fill="#0f1012" />
    <path d="M34 42H44L41 33L54 49Q50 54 45 50L43 46H34Z" fill="#d8dadb" />
  </Blueprint>,
  <svg width="66" height="66" viewBox="0 0 66 66">
    <path d="M3 -4L22 -2L33 5L30 34L18 60L-1 68L3 42L-4 38L2 30L-4 25Z" fill="#f28a3c" />
    <path d="M22 -2L32 0L38 14L30 40L-4 25Z" fill="#ee3f74" />
    <path d="M3 -4L20 -2L4 24L-4 25Z" fill="#f6c95e" />
    <path d="M8 8L2 28L14 24Z" fill="#d93bd3" />
    <path d="M-1 68L3 46L18 44L26 56Z" fill="#f04a8e" />
    <path d="M46 -3L68 16L62 30L67 58L39 70L20 58L34 14Z" fill="#3a8fe6" />
    <path d="M46 -3L68 16L50 18Z" fill="#62dcf7" />
    <path d="M44 50L67 58L39 70Z" fill="#4cb4f5" />
    <rect x="9" y="10" width="46" height="46" fill="#120b10" />
    <text x="14" y="32" fill="#fff" fontFamily={`"Liberation Mono", monospace`} fontWeight="700" fontSize="24" letterSpacing="-2.500">IJ</text>
    <rect x="14" y="47" width="17" height="3.400" fill="#fff" />
  </svg>,
  <svg width="66" height="66" viewBox="0 0 66 66">
    <circle cx="33" cy="33" r="37" fill="#fdfdfd" />
    <path d="M20 14Q14 14 14 18T20 22H36V14Z" fill="#183242" />
    <path d="M21 22Q22 11 33 11T45 22Z" fill="#79d596" />
    <path d="M25 8L28 13M41 8L38 13" stroke="#79d596" strokeWidth="1.600" />
    <rect x="14" y="22" width="34" height="26" rx="3" fill="#4f83ef" />
    <path d="M46 30Q46 28 49 28H52V48Q52 53 46 53H43V48H46Z" fill="#183242" />
    <circle cx="33" cy="31" r="3" fill="none" stroke="#183242" strokeWidth="2" />
    <path d="M31.500 34L25 53M34.500 34L41 53" stroke="#183242" strokeWidth="3.600" />
    <path d="M27 46H39" stroke="#183242" strokeWidth="2" />
  </svg>,
  <Tile fill="#ef7847">
    <circle cx="49" cy="17" r="5.500" fill="#fff" />
    <path d="M45 21L32 27Q25 33 23 37L26 40L18 52L12 52.500L13.500 54H18L30 44L38 38L46 24Z" fill="#fff" />
    <path d="M45 23L27 38M47 25L30 41M26 39L17 53" stroke="#ef7847" strokeWidth="1.100" />
  </Tile>,
  <Tile fill="url(#navy)">
    <path d="M24 17Q33 12 39 18Q48 16 49 26Q57 33 52 41Q50 47 42 46Q35 56 27 47Q15 49 14 40Q9 33 15 27Q16 18 24 17Z" fill="none" stroke="#e6e8ee" strokeWidth="3.200" />
    <path d="M26 29L30 32L26 34M33 36Q36 39 39 36" fill="none" stroke="#f2f3f6" strokeWidth="2.400" />
  </Tile>,
  <svg width="66" height="66" viewBox="0 0 66 66">
    <rect x="-7" y="-8" width="82" height="82" rx="17" fill="#fff" />
    <path d="M34 -3L66 14V52L34 69L2 52V14Z" fill="#b73b32" />
    <path d="M34 -3L66 14L54 21L34 9L14 21L2 14Z" fill="#cb4e43" />
    <path d="M66 14V52L34 69V56L54 45V21Z" fill="#8f302b" />
    <path d="M34 9L54 21V45L34 56L14 45V21Z" fill="#5a1e1d" />
    <path d="M34 22L43 27.500V38L34 43.500L25 38V27.500Z" fill="#260a0a" />
  </svg>,
  <Tile fill="#fff">
    <path d="M9 36Q10 14 25 9.500Q32 9 32 26Q22 28 18 35" fill="none" stroke="url(#gold)" strokeWidth="4.200" strokeLinecap="round" />
    <path d="M58 37Q57 19 46 12Q40 12 38 26Q47 28 50 35" fill="none" stroke="url(#gold)" strokeWidth="4.200" strokeLinecap="round" />
    <ellipse cx="34" cy="42" rx="19" ry="16" fill="#fff" stroke="url(#gold)" strokeWidth="4.500" />
  </Tile>,
  <Tile fill="url(#rim)">
    <rect x="2" y="2.500" width="62" height="61" rx="13" fill="#050505" />
    <rect x="6" y="8" width="54" height="51" rx="8" fill="#1b2a2a" />
    <path d="M6 17H60M6 26H60M6 43H60M6 51H60M15 8V59M26 8V59M38 8V59M50 8V59" stroke="#3d4f4f" strokeWidth="0.900" />
    <path d="M6 36H15L17 10L20 46L22 34Q26 40 29 37Q33 24 37 36Q42 30 46 37L51 38H60" fill="none" stroke="#7fd9cc" strokeWidth="1.300" />
  </Tile>,
  <Tile fill="url(#rim)">
    <rect x="2" y="2.500" width="62" height="61" rx="13" fill="#050505" />
    <rect x="6" y="8" width="54" height="51" rx="8" fill="#262626" />
    <path d="M11 12L18 17L11 22M22 25H32" fill="none" stroke="#f4f4f4" strokeWidth="2.200" />
  </Tile>,
  <svg width="66" height="66" viewBox="0 0 66 66">
    <rect x="0" y="1" width="62" height="66" rx="14" fill="#e4e4e4" transform="rotate(-5 31 34)" />
    <rect width="66" height="66" rx="15" fill="url(#sheet)" />
    <path d="M10 16H56M10 25H56M10 34H56M10 43H56" stroke="#e2e2e4" strokeWidth="2.400" />
    <text x="33" y="52" textAnchor="middle" fill="#232323" fontFamily={`"Liberation Serif", serif`} fontWeight="700" fontSize="54">T</text>
  </svg>,
];

const QQMusic = () => (
  <Tile fill="#fff">
    <circle cx="33" cy="33" r="25" fill="#f8dc48" />
    <path d="M24 15Q38 14 47 8Q47 20 35.500 26L38 42L34 41L29 26Z" fill="#5cc6c0" />
    <path d="M33 37Q41 36 44 44Q46 52 40 56Q33 59 27 55Q20 50 23 43Q26 37 33 37Z" fill="url(#note)" />
  </Tile>
);

const Trash = () => (
  <svg width="66" height="66" viewBox="0 0 66 66">
    <path d="M4 4L12 64Q13 69.500 33 69.500T54 64L62 4Z" fill="url(#glass)" />
    <path d="M22 16L26 66M44 16L40 66" stroke="#f7f8f9" strokeWidth="5" opacity="0.500" />
    <ellipse cx="33" cy="4" rx="29" ry="7" fill="#c9b1b1" stroke="#ececed" strokeWidth="1.600" />
  </svg>
);

const RUNNING = new Set([0, 2, 20, 26]);

/* ---------- app ---------- */

const MENUS = ["文件", "编辑", "视图", "历史记录", "书签", "个人资料", "标签页", "窗口", "帮助"];
const FOLDERS = ["运维", "前端", "后端", "工具", "安卓", "ios"];
const PAGES = ["Dashboard", "Cluster", "Topic", "Consumer", "Producer", "Message", "DLQMessage", "MessageTrace"];

export default function App() {
  return (
    <Desktop>
      <GlobalStyle />
      <MenuBar>
        <MenuTitles>
          <AppleMark><Apple /></AppleMark>
          <AppName>Chrome</AppName>
          {MENUS.map((m) => <span key={m}>{m}</span>)}
        </MenuTitles>
        <StatusIcons />
        <StatusItem $gap={34} $w={250}><Clock>1月27日 周五 02:31</Clock></StatusItem>
      </MenuBar>
      <Seam />

      <Window>
        <TabStrip>
          <Lights>
            <Light $c="#ed6a5e" $b="#d8594d" />
            <Light $c="#f5bf4f" $b="#dba63c" />
            <Light $c="#61c554" $b="#4fae43" />
          </Lights>
          <Tab $active $w={480} $gap={18}>
            <Globe />
            <TabLabel>RocketMQ-Dashboard</TabLabel>
            <Close />
          </Tab>
          <Tab $w={476} $gap={16}>
            <NacosLogo />
            <TabLabel>Nacos</TabLabel>
            <Close />
          </Tab>
          <TabDivider />
          <NewTab>
            <svg width="24" height="24" viewBox="0 0 24 24"><path d="M12 0V24M0 12H24" stroke="#3c4043" strokeWidth="3" /></svg>
            <svg width="20" height="12" viewBox="0 0 20 12"><path d="M1.500 1.500L10 10L18.500 1.500" fill="none" stroke="#3c4043" strokeWidth="2.600" /></svg>
          </NewTab>
        </TabStrip>

        <Toolbar>
          <IconSlot><svg width="26" height="26" viewBox="0 0 26 26"><path d="M26 13H2.500M13.500 1.500L2 13L13.500 24.500" fill="none" stroke="#5f6368" strokeWidth="2.800" /></svg></IconSlot>
          <IconSlot><svg width="26" height="26" viewBox="0 0 26 26"><path d="M0 13H23.500M12.500 1.500L24 13L12.500 24.500" fill="none" stroke="#bbbdc0" strokeWidth="2.800" /></svg></IconSlot>
          <IconSlot><svg width="27" height="26" viewBox="0 0 27 26"><path d="M23.500 16.500A11.500 11.500 0 1 1 22 6.500" fill="none" stroke="#5f6368" strokeWidth="2.800" /><path d="M26.500 0V11H15.500Z" fill="#5f6368" /></svg></IconSlot>
          <Omnibox>
            <svg width="28" height="28" viewBox="0 0 28 28"><circle cx="14" cy="14" r="12.500" fill="none" stroke="#5f6368" strokeWidth="2.600" /><path d="M14 12.500V20.500M14 7.500V10.200" stroke="#5f6368" strokeWidth="2.800" /></svg>
            <Url><UrlHost>localhost</UrlHost>:8058/#/</Url>
            <IconSlot><svg width="24" height="30" viewBox="0 0 24 30"><path d="M7 9.500H4.500Q1.500 9.500 1.500 12.500V25.500Q1.500 28.500 4.500 28.500H19.500Q22.500 28.500 22.500 25.500V12.500Q22.500 9.500 19.500 9.500H17M12 19V2M6.500 7L12 1.500L17.500 7" fill="none" stroke="#5f6368" strokeWidth="2.400" /></svg></IconSlot>
            <IconSlot><svg width="30" height="29" viewBox="0 0 30 29"><path d="M15 2.500L18.700 10.900L27.900 11.700L20.900 17.700L23 26.700L15 21.900L7 26.700L9.100 17.700L2.100 11.700L11.300 10.900Z" fill="none" stroke="#5f6368" strokeWidth="2.500" /></svg></IconSlot>
          </Omnibox>
          <IconSlot><svg width="32" height="28" viewBox="0 0 32 28"><path d="M0 0H32L16 28Z" fill="#b8babc" /><path d="M6.500 0H25.500L16 17Z" fill="#97999c" /><path d="M12 0H20L16 7Z" fill="#fff" /></svg></IconSlot>
          <IconSlot><svg width="29" height="29" viewBox="0 0 29 29"><path d="M2.500 7H8.500V4.500A3.700 3.700 0 0 1 16 4.500V7H22Q24 7 24 9V14.500H25.200A3.700 3.700 0 0 1 25.200 22H24V27Q24 29 22 29H17V27.500A3.700 3.700 0 0 0 9.500 27.500V29H2.500Q0.500 29 0.500 27V21.500H2A3.700 3.700 0 0 0 2 14H0.500V9Q0.500 7 2.500 7Z" fill="#5f6368" /></svg></IconSlot>
          <IconSlot><svg width="28" height="28" viewBox="0 0 28 28"><path d="M0 0H28V28H0ZM4 4V24H18V4Z" fill="#5f6368" fillRule="evenodd" /></svg></IconSlot>
          <IconSlot><Avatar>翔</Avatar></IconSlot>
          <IconSlot><svg width="6" height="26" viewBox="0 0 6 26"><g fill="#5f6368"><circle cx="3" cy="3" r="3" /><circle cx="3" cy="13" r="3" /><circle cx="3" cy="23" r="3" /></g></svg></IconSlot>
        </Toolbar>

        <Bookmarks>
          {FOLDERS.map((f) => <Bookmark key={f} $w={128}><Folder />{f}</Bookmark>)}
          <BookmarkDivider />
          <Bookmark><Folder />其他书签</Bookmark>
        </Bookmarks>

        <Nav>
          <Brand>RocketMQ-Dashboard</Brand>
          <NavItem $raised>OPS</NavItem>
          {PAGES.map((p) => <NavItem key={p} $active={p === "Dashboard"}>{p}</NavItem>)}
          <Language>ChangeLanguage<Caret /></Language>
        </Nav>

        <Page>
          <LeftColumn>
            <ChartHeader>
              <ChartTitle $track={0.15}>Broker TOP 10</ChartTitle>
              <Legend><Swatch /><LegendLabel>TotalMsg</LegendLabel></Legend>
            </ChartHeader>
            <BarChart />
            <ChartHeader>
              <ChartTitle $track={0.3}>Topic TOP 10</ChartTitle>
              <Legend><Swatch /><LegendLabel>TotalMsg</LegendLabel></Legend>
            </ChartHeader>
          </LeftColumn>

          <RightColumn>
            <FormRow>
              <FieldName $w={240}>Date :</FieldName>
              <DateInput />
              <Calendar />
            </FormRow>
            <ChartHeader $top={60}>
              <ChartTitle $track={0.05}>Broker 5min trend</ChartTitle>
              <span />
              <ChartTools />
            </ChartHeader>
            <TrendChart />
            <FormRow $muted>
              <FieldName $w={270}>Topic :</FieldName>
              <Select>No results match<SelectArrow /></Select>
            </FormRow>
            <ChartHeader $top={44}>
              <ChartTitle $track={0.05}>Topic 5min trend</ChartTitle>
              <span />
              <ChartTools />
            </ChartHeader>
            <Legend $centered>
              <svg width="50" height="22" viewBox="0 0 50 22"><path d="M0 11H50" stroke="#5b70c0" strokeWidth="4" /><circle cx="25" cy="11" r="11" fill="#5b70c0" /></svg>
              undefined
            </Legend>
          </RightColumn>
        </Page>
      </Window>

      <Dock>
        {ICONS.map((icon, i) => (
          <DockSlot key={i}>
            <DockIcon>{icon}</DockIcon>
            {RUNNING.has(i) && <RunningDot />}
          </DockSlot>
        ))}
        <DockDivider $gap={20} />
        <DockSlot $gap={16}>
          <DockIcon><QQMusic /></DockIcon>
          <RunningDot />
        </DockSlot>
        <DockDivider $gap={20} />
        <DockSlot $gap={17}>
          <DockIcon><Trash /></DockIcon>
        </DockSlot>
      </Dock>
      <DockDefs />
    </Desktop>
  );
}
